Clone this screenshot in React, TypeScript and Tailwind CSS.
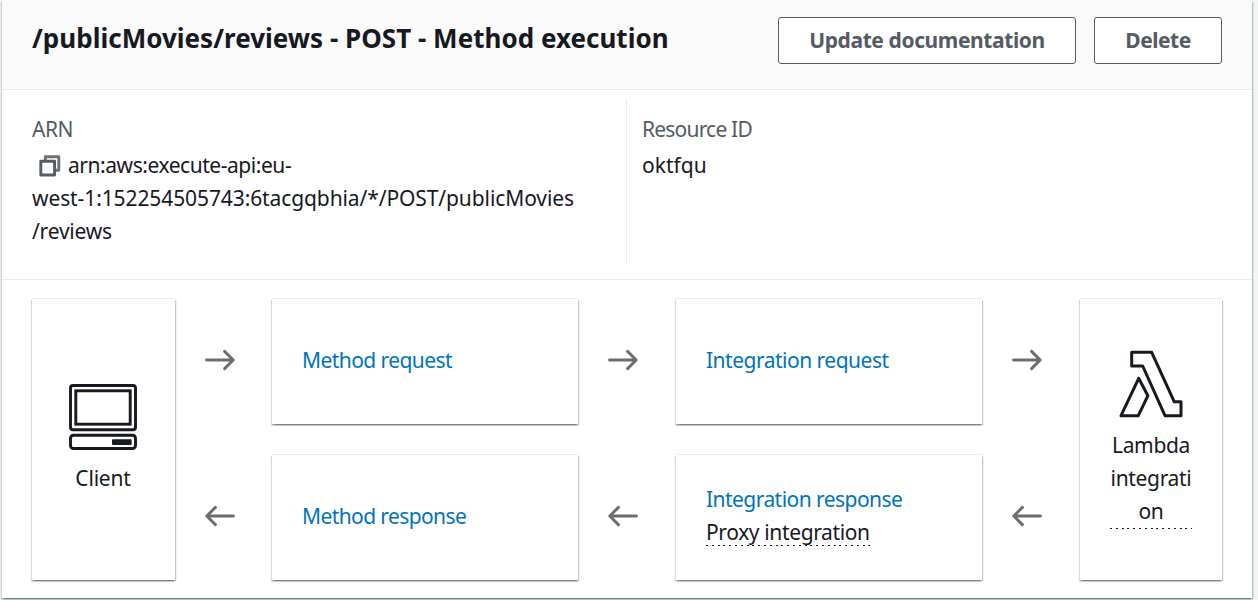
import type { ReactNode } from "react";

const CARD =
  "border-t border-[#eaeded] bg-white shadow-[0_1.5px_1.5px_0_rgba(0,28,36,0.32),1.5px_1.5px_1.5px_0_rgba(0,28,36,0.18),-1.5px_1.5px_1.5px_0_rgba(0,28,36,0.18)]";

function Arrow({ back = false }: { back?: boolean }) {
  return (
    <svg
      width="30"
      height="22"
      viewBox="0 0 30 22"
      fill="none"
      stroke="#6b6d70"
      strokeWidth="2.9"
      strokeLinecap="round"
      strokeLinejoin="round"
      className={back ? "rotate-180" : ""}
    >
      <path d="M1.5 11H28M19.6 2.4 28.2 11l-8.6 8.6" />
    </svg>
  );
}

function ArrowColumn() {
  return (
    <div className="flex w-[98px] flex-col gap-[30px] pl-[30px]">
      <div className="flex h-[126px] items-center pb-[2px]">
        <Arrow />
      </div>
      <div className="flex h-[126px] items-center pb-[2px]">
        <Arrow back />
      </div>
    </div>
  );
}

function StepCard({ children }: { children: ReactNode }) {
  return (
    <div className={`flex h-[126px] w-[306px] flex-col items-start justify-center pb-[2px] pl-[30px] ${CARD}`}>
      {children}
    </div>
  );
}

function DottedLine() {
  return (
    <div className="h-px w-full bg-[repeating-linear-gradient(90deg,#16191f_0px,#16191f_2px,transparent_2px,transparent_5.8px)]" />
  );
}

function CopyIcon() {
  return (
    <svg
      width="22"
      height="22"
      viewBox="0 0 22 22"
      fill="none"
      stroke="#545b64"
      strokeWidth="2.9"
      strokeLinejoin="round"
      className="mr-[7px] ml-[7px] inline-block align-[-4px]"
    >
      <path d="M6.3 5.8V1.7h13.5v13.5h-3.6" stroke="#687078" />
      <path d="M1.8 6.2h13.8v13.8H1.8z" />
    </svg>
  );
}

function ComputerIcon() {
  return (
    <svg width="68" height="66" viewBox="0 0 68 66" fill="none" stroke="#16191f" strokeWidth="2.9">
      <rect x="1.5" y="1.5" width="65" height="44.2" rx="2.5" />
      <rect x="6.8" y="6.8" width="54.4" height="33.4" />
      <rect x="1.5" y="51.2" width="65" height="13.3" rx="3" />
      <rect x="43" y="55.3" width="19.7" height="5.6" rx="0.8" fill="#16191f" stroke="none" />
    </svg>
  );
}

function LambdaIcon() {
  return (
    <svg width="64" height="68" viewBox="0 0 64 68" fill="none" stroke="#16191f" strokeWidth="3" strokeLinejoin="round">
      <path d="M12.7 2.3h20l22.6 49.5H62v13.9H46L23.7 16h-11z" />
      <path d="M19.7 28.3 28.9 45.7 19.3 65.7H2z" />
    </svg>
  );
}

const BUTTON =
  "flex h-[47px] items-center justify-center rounded-[3px] border border-[#545b64] bg-white font-bold text-[#545b64]";

export default function App() {
  return (
    <div className="h-[600px] overflow-hidden bg-[#f2f3f3] pl-[2px] font-['Noto_Sans',sans-serif] text-[21px] leading-[33px] text-[#16191f]">
      <main className="h-[598px] w-[1250px] bg-white shadow-[0_1.5px_1.5px_0_rgba(0,28,36,0.32),1.5px_1.5px_1.5px_0_rgba(0,28,36,0.18),-1.5px_1.5px_1.5px_0_rgba(0,28,36,0.18)]">
        <header className="flex h-[90px] items-start border-b border-[#eaeded] bg-[#fafafa] pt-[17px] pr-[30px] pl-[30px]">
          <h1 className="mt-[2px] flex-1 text-[26px] leading-[38px] font-bold tracking-[0.02px] whitespace-nowrap">
            /publicMovies/reviews - POST - Method execution
          </h1>
          <div className="flex gap-[18px]">
            <button className={`w-[298px] tracking-[-0.4px] ${BUTTON}`}>Update documentation</button>
            <button className={`w-[128px] tracking-[-0.5px] ${BUTTON}`}>Delete</button>
          </div>
        </header>

        <section className="flex h-[190px] border-b border-[#eaeded] pt-[9px] pb-[15px] pl-[30px]">
          <div className="w-[595px] border-r border-[#eaeded] pt-[14px]">
            <div className="tracking-[-0.5px] text-[#545b64]">ARN</div>
            <div className="mt-[3px] whitespace-nowrap">
              <div className="tracking-[-0.45px]">
                <CopyIcon />
                arn:aws:execute-api:eu-
              </div>
              <div className="tracking-[-0.1px]">west-1:152254505743:6tacgqbhia/*/POST/publicMovies</div>
              <div className="tracking-[-0.2px]">/reviews</div>
            </div>
          </div>
          <div className="pt-[14px] pl-[15px]">
            <div className="tracking-[-0.8px] text-[#545b64]">Resource ID</div>
            <div className="mt-[3px]">oktfqu</div>
          </div>
        </section>

        <section className="flex pt-[18px] pl-[30px]">
          <div className={`flex h-[282px] w-[143px] flex-col items-center pt-[85px] pr-px ${CARD}`}>
            <ComputerIcon />
            <div className="mt-[12px] tracking-[-0.2px]">Client</div>
          </div>
          <ArrowColumn />
          <div className="-ml-px flex flex-col gap-[30px]">
            <StepCard>
              <a className="tracking-[-0.57px] text-[#0073bb]">Method request</a>
            </StepCard>
            <StepCard>
              <a className="tracking-[-0.6px] text-[#0073bb]">Method response</a>
            </StepCard>
          </div>
          <ArrowColumn />
          <div className="flex flex-col gap-[30px]">
            <StepCard>
              <a className="tracking-[-0.5px] text-[#0073bb]">Integration request</a>
            </StepCard>
            <StepCard>
              <a className="tracking-[-0.55px] text-[#0073bb]">Integration response</a>
              <div className="mb-[4px] h-[30px] w-[164px] whitespace-nowrap">
                <div className="h-[29px] tracking-[-0.37px]">Proxy integration</div>
                <DottedLine />
              </div>
            </StepCard>
          </div>
          <ArrowColumn />
          <div className={`flex h-[282px] w-[142px] flex-col items-center pt-[51px] ${CARD}`}>
            <LambdaIcon />
            <div className="mt-[11px] w-[82px] text-center tracking-[-0.33px]">
              <div className="h-[99px]">
                Lambda
                <br />
                integrati
                <br />
                on
              </div>
              <DottedLine />
            </div>
          </div>
        </section>
      </main>
    </div>
  );
}
